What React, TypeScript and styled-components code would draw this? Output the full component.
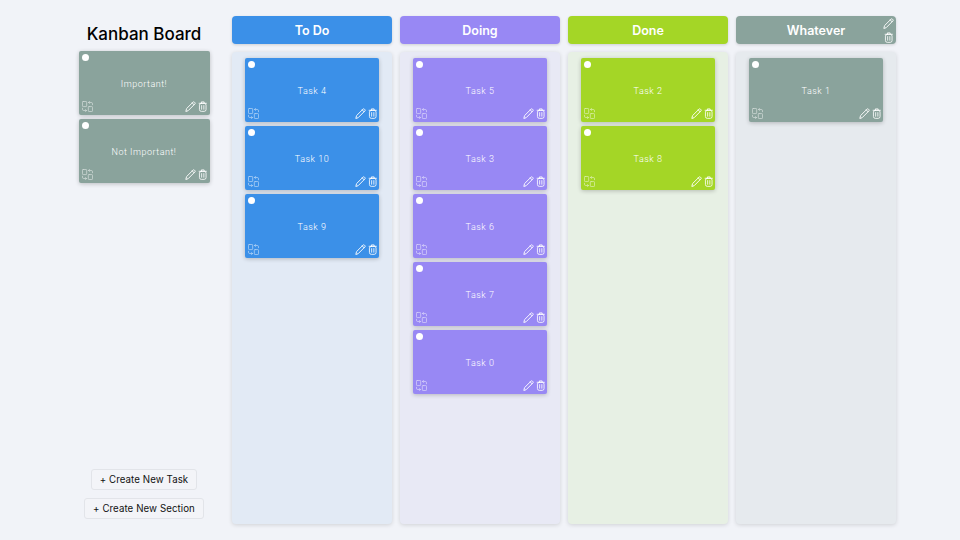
import React from "react";
import styled, { createGlobalStyle } from "styled-components";

const Global = createGlobalStyle`
  html, body { margin: 0; padding: 0; background: #f1f3f8; }
  #root { width: 960px; height: 540px; overflow: hidden; }
  * { box-sizing: border-box; }
`;

const Page = styled.div`
  display: flex;
  width: 960px;
  height: 540px;
  padding: 16px 64px 16px 64px;
  gap: 8px;
  font-family: "Inter", "Open Sans", sans-serif;
`;

const Sidebar = styled.aside`
  width: 160px;
  display: flex;
  flex-direction: column;
  align-items: center;
`;

const Title = styled.h1`
  margin: 7px 0 5px;
  font-size: 17px;
  line-height: 23px;
  font-weight: 500;
  color: #000;
  white-space: nowrap;
`;

const SideList = styled.div`
  display: flex;
  flex-direction: column;
  gap: 4px;
  flex: 1;
`;

const SideActions = styled.div`
  display: flex;
  flex-direction: column;
  align-items: center;
  gap: 8px;
  margin-bottom: 5px;
`;

const ActionButton = styled.button`
  font-family: inherit;
  font-size: 9.7px;
  letter-spacing: 0.08px;
  height: 21px;
  padding: 0 8px;
  border: 1px solid #e2e4e9;
  border-radius: 3px;
  background: #f3f4f8;
  color: #111;
  white-space: nowrap;
`;

const Column = styled.section`
  width: 160px;
  display: flex;
  flex-direction: column;
  gap: 8px;
`;

const Header = styled.header<{ $color: string }>`
  position: relative;
  height: 28px;
  border-radius: 4px;
  background: ${(p) => p.$color};
  color: #fff;
  font-size: 12.5px;
  font-weight: 600;
  display: flex;
  align-items: center;
  justify-content: center;
  box-shadow: 0 1px 3px rgba(0, 0, 0, 0.15);
`;

const HeaderTools = styled.div`
  position: absolute;
  right: 2px;
  top: 2px;
  display: flex;
  flex-direction: column;
  gap: 3px;
  align-items: center;
`;

const Lane = styled.div<{ $tint: string }>`
  flex: 1;
  background: ${(p) => p.$tint};
  border-radius: 4px;
  padding: 6px 13px;
  display: flex;
  flex-direction: column;
  gap: 4px;
  box-shadow: 0 1px 4px rgba(0, 0, 0, 0.14);
`;

const Card = styled.article<{ $color: string; $wide?: boolean }>`
  position: relative;
  width: ${(p) => (p.$wide ? 131 : 134)}px;
  height: 64px;
  flex: none;
  border-radius: 2px;
  background: ${(p) => p.$color};
  color: #fff;
  display: flex;
  align-items: center;
  justify-content: center;
  box-shadow: 0 1px 4px rgba(0, 0, 0, 0.22);
`;

const CardLabel = styled.span`
  font-family: "Roboto", sans-serif;
  font-size: 9px;
  font-weight: 300;
  letter-spacing: 0.5px;
  margin-top: 1px;
`;

const Dot = styled.span`
  position: absolute;
  left: 3px;
  top: 3px;
  width: 7px;
  height: 7px;
  border-radius: 50%;
  background: #fff;
`;

const MoveTool = styled.span`
  position: absolute;
  left: 3px;
  bottom: 3px;
  display: flex;
  opacity: 0.6;
`;

const CardTools = styled.span`
  position: absolute;
  right: 2px;
  bottom: 3px;
  display: flex;
  align-items: center;
  gap: 2px;
`;

const Svg = styled.svg`
  display: block;
  fill: none;
  stroke: #fff;
  stroke-linecap: round;
  stroke-linejoin: round;
`;

const Pencil = () => (
  <Svg width="11" height="11" viewBox="0 0 12 12" strokeWidth="1">
    <path d="M1 11 1.7 8.3 8.8 1.2a1 1 0 0 1 1.4 0l.6.6a1 1 0 0 1 0 1.4L3.7 10.3Z" />
    <path d="M7.9 2.1 9.9 4.1" />
  </Svg>
);

const Trash = () => (
  <Svg width="9.5" height="11" viewBox="0 0 10 12" strokeWidth="0.9">
    <path d="M1 2.5h8M3.5 2.5V1h3v1.5" />
    <rect x="1.4" y="2.5" width="7.2" height="8.8" rx="2" />
    <path d="M3.8 5v4M6.2 5v4" />
  </Svg>
);

const Move = () => (
  <Svg width="11" height="11" viewBox="0 0 12 12" strokeWidth="0.85">
    <rect x="0.5" y="0.5" width="4.6" height="5.6" rx="0.8" />
    <rect x="6.9" y="6.1" width="4.6" height="5.4" rx="0.8" />
    <path d="M7.2 1.6h2.8c1 0 1.5.5 1.5 1.5v1M7.2 1.6 8.3.6M7.2 1.6l1.1 1" />
    <path d="M4.8 10.4H2c-1 0-1.5-.5-1.5-1.5v-1M4.8 10.4l-1.1-1M4.8 10.4l-1.1 1" />
  </Svg>
);

const TaskCard = ({ label, color, wide }: { label: string; color: string; wide?: boolean }) => (
  <Card $color={color} $wide={wide}>
    <Dot />
    <CardLabel>{label}</CardLabel>
    <MoveTool><Move /></MoveTool>
    <CardTools><Pencil /><Trash /></CardTools>
  </Card>
);

const BLUE = "#3b90e8";
const PURPLE = "#9888f4";
const GREEN = "#a4d626";
const GREY = "#8aa39c";

const columns = [
  { title: "To Do", color: BLUE, tint: "#e2eaf5", tasks: ["Task 4", "Task 10", "Task 9"] },
  { title: "Doing", color: PURPLE, tint: "#e8e9f5", tasks: ["Task 5", "Task 3", "Task 6", "Task 7", "Task 0"] },
  { title: "Done", color: GREEN, tint: "#e7f0e4", tasks: ["Task 2", "Task 8"] },
  { title: "Whatever", color: GREY, tint: "#e6eaee", tasks: ["Task 1"], tools: true },
];

export default function App() {
  return (
    <>
      <Global />
      <Page>
        <Sidebar>
          <Title>Kanban Board</Title>
          <SideList>
            <TaskCard label="Important!" color={GREY} wide />
            <TaskCard label="Not Important!" color={GREY} wide />
          </SideList>
          <SideActions>
            <ActionButton>+ Create New Task</ActionButton>
            <ActionButton>+ Create New Section</ActionButton>
          </SideActions>
        </Sidebar>
        {columns.map((c) => (
          <Column key={c.title}>
            <Header $color={c.color}>
              {c.title}
              {c.tools && (
                <HeaderTools><Pencil /><Trash /></HeaderTools>
              )}
            </Header>
            <Lane $tint={c.tint}>
              {c.tasks.map((t) => (
                <TaskCard key={t} label={t} color={c.color} />
              ))}
            </Lane>
          </Column>
        ))}
      </Page>
    </>
  );
}
